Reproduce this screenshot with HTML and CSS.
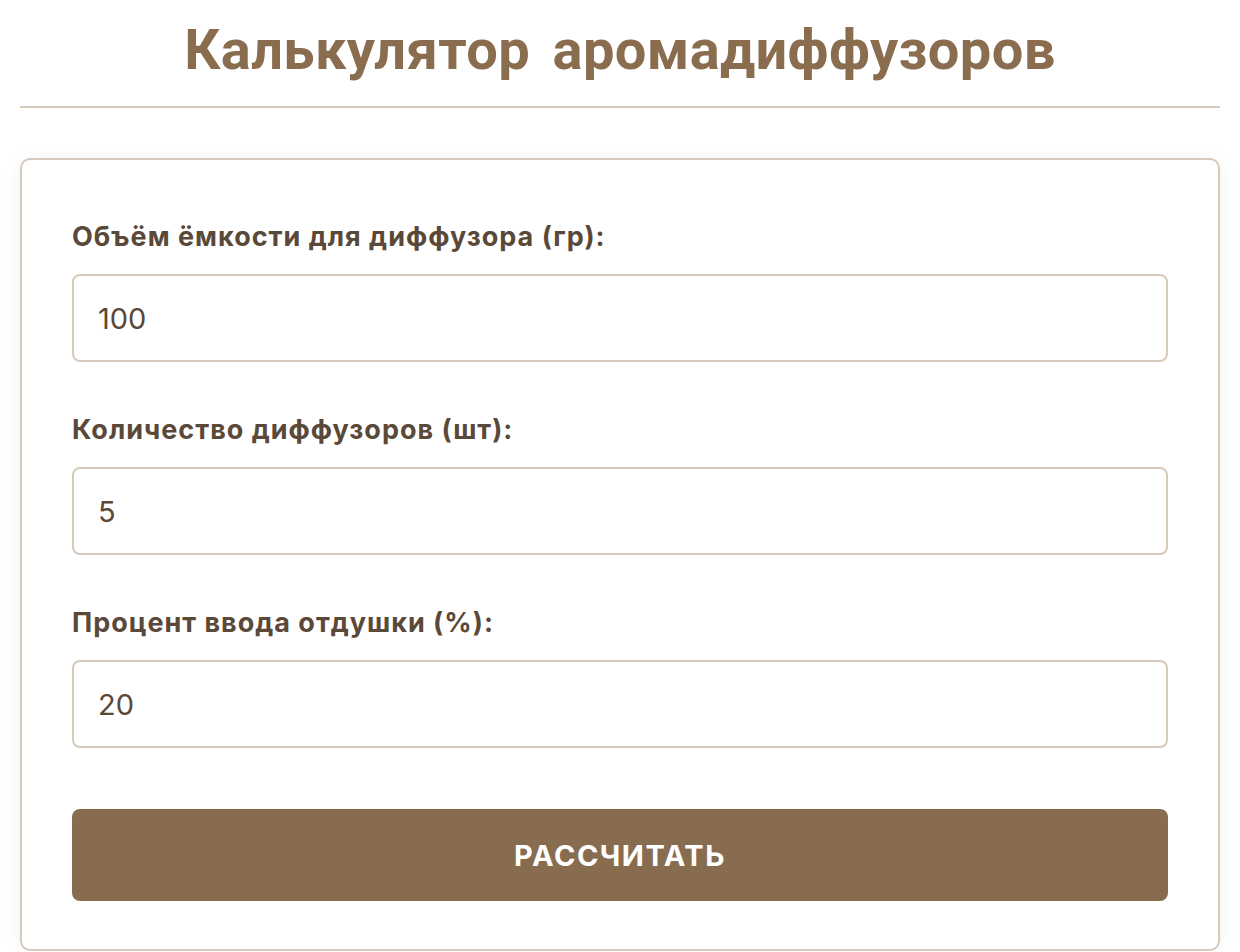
FILE: index.html
```html
<!DOCTYPE html>
<html lang="ru">
<head>
  <meta charset="UTF-8" />
  <meta name="viewport" content="width=device-width, initial-scale=1" />
  <title>Калькулятор аромадиффузоров</title>
  <link rel="stylesheet" href="styles.css">
</head>
<body>
  <h1>Калькулятор аромадиффузоров</h1>

  <div class="calc">
    <div class="field">
      <label for="volume">Объём ёмкости для диффузора (гр):</label>
      <input type="number" id="volume" value="100" />
    </div>
    <div class="field">
      <label for="count">Количество диффузоров (шт):</label>
      <input type="number" id="count" value="5" />
    </div>
    <div class="field">
      <label for="percent">Процент ввода отдушки (%):</label>
      <input type="number" id="percent" value="20" />
    </div>
    <button type="button" class="calc-btn">Рассчитать</button>
  </div>
</body>
</html>
```

FILE: styles.css
```css
body {
  margin: 0;
  padding: 0 20px;
  font-family: 'Inter', 'Liberation Sans', sans-serif;
  background: #fff;
  color: #5a4838;
}

h1 {
  margin: 0;
  padding: 18px 0 23px;
  font-family: 'Roboto', 'Liberation Sans', sans-serif;
  font-size: 56px;
  line-height: 65px;
  font-weight: 700;
  letter-spacing: 0.4px;
  word-spacing: 8px;
  text-align: center;
  color: #8a6d4f;
  border-bottom: 2px solid #d8cabb;
}

.calc {
  margin-top: 50px;
  padding: 62px 50px 48px;
  background: #fff;
  border: 2px solid #d8cabb;
  border-radius: 10px;
  box-shadow: 0 0 20px rgba(0, 0, 0, 0.05);
}

.field {
  display: flex;
  flex-direction: column;
  gap: 22px;
  margin-bottom: 53px;
}

.field:last-of-type {
  margin-bottom: 61px;
}

.field label {
  font-size: 27px;
  line-height: 30px;
  font-weight: 700;
  letter-spacing: 1px;
  color: #5a4838;
}

.field input {
  box-sizing: border-box;
  width: 100%;
  height: 88px;
  padding: 0 24px;
  border: 2px solid #d8cabb;
  border-radius: 8px;
  font-family: inherit;
  font-size: 29px;
  color: #5a4838;
  background: #fff;
  outline: none;
}

.field input::-webkit-outer-spin-button,
.field input::-webkit-inner-spin-button {
  -webkit-appearance: none;
  margin: 0;
}

.calc-btn {
  display: block;
  width: 100%;
  height: 92px;
  border: none;
  border-radius: 8px;
  background: #886c4f;
  color: #fff;
  font-family: inherit;
  font-size: 29px;
  font-weight: 700;
  letter-spacing: 1.5px;
  text-transform: uppercase;
  cursor: pointer;
}
```
